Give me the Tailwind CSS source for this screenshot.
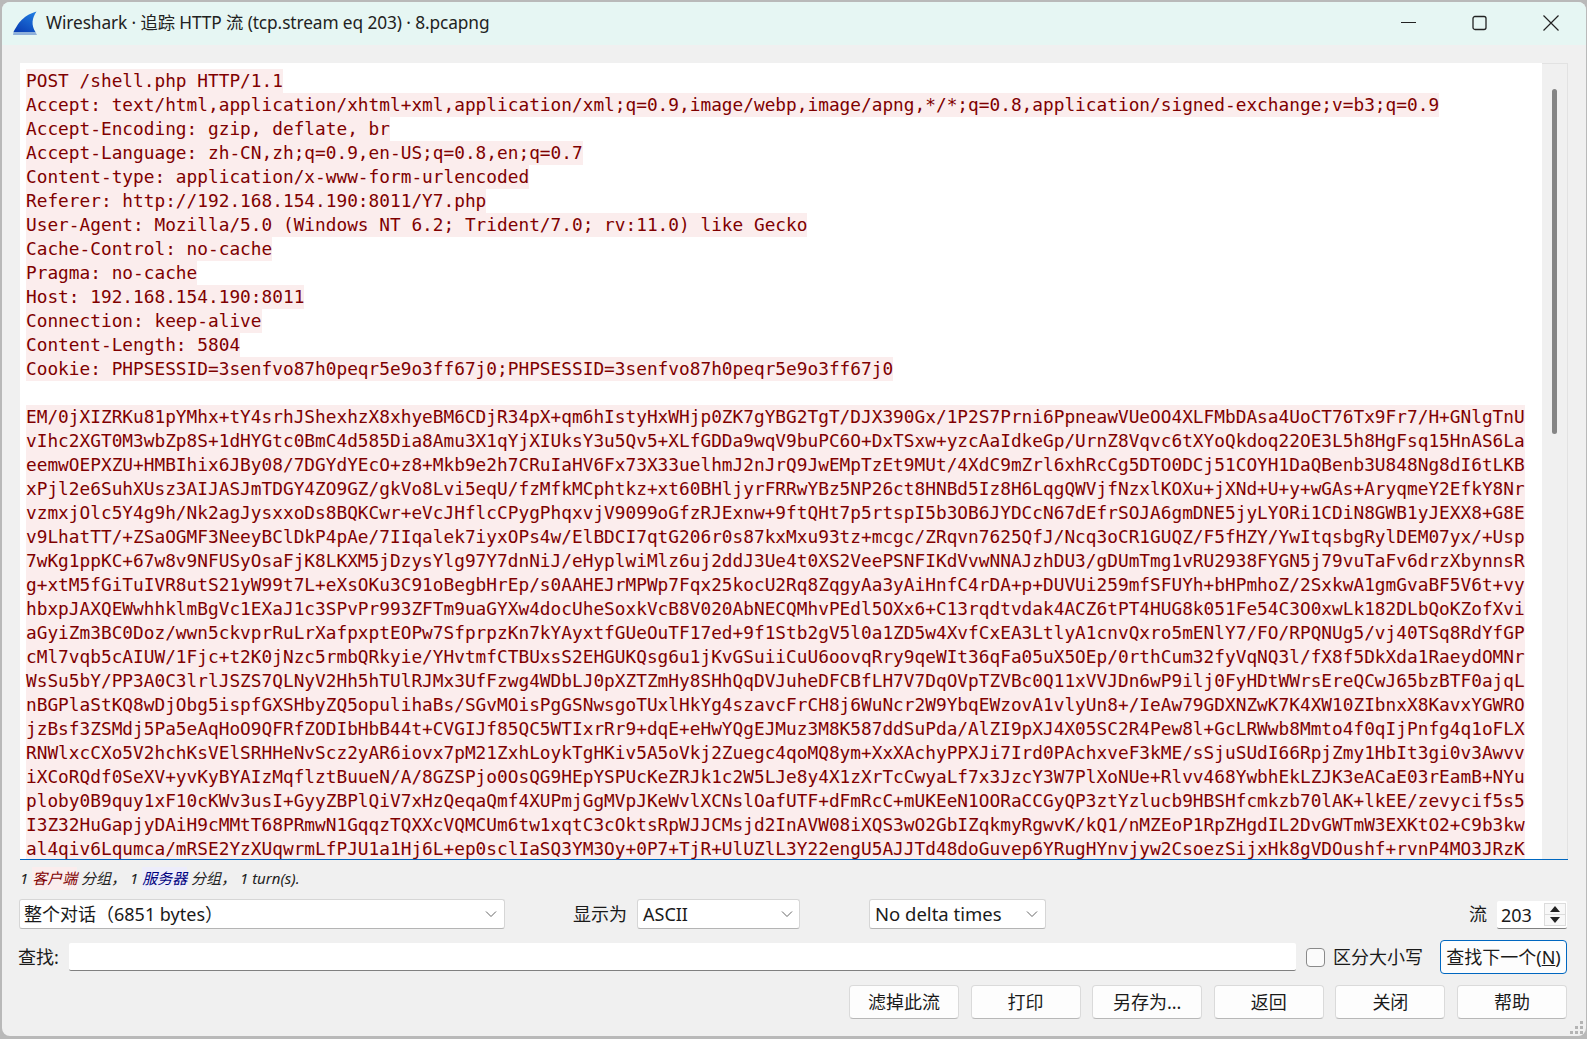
<!DOCTYPE html>
<html lang="zh-CN">
<head>
    <meta charset="UTF-8">
    <title>Wireshark · 追踪 HTTP 流</title>
    <script src="https://cdn.jsdelivr.net/npm/@tailwindcss/browser@4"></script>
</head>
<body class="w-[1587px] h-[1039px] overflow-hidden bg-[#b9b9b9] pt-[2px] pl-[2px] pr-[1px] pb-[3px] font-['Noto_Sans','Noto_Sans_CJK_SC',sans-serif] text-[#1a1a1a]">

    <div class="relative w-full h-full rounded-[8px] overflow-hidden bg-[#f0f0f0] flex flex-col">

        <!-- title bar -->
        <div class="h-[43px] shrink-0 bg-[#e6f6f3] flex items-center pl-[11px] pb-[2px] relative">
            <svg width="25" height="25" viewBox="0 0 25 25" class="shrink-0 mt-[1px]">
                <defs>
                    <linearGradient id="fin" x1="0.8" y1="0" x2="0.2" y2="1">
                        <stop offset="0" stop-color="#1f7be0"/>
                        <stop offset="1" stop-color="#0b3fb4"/>
                    </linearGradient>
                </defs>
                <path d="M0.5 21 C4 15 8 5 23.5 0.5 C19 7 18 14 22.5 21 Z" fill="url(#fin)"/>
                <path d="M0.5 21 L22.5 21 L24 24 L0 24 Z" fill="#8fb0da"/>
            </svg>
            <span class="ml-[8px] text-[17.3px] tracking-[-0.1px] text-[#222]">Wireshark · 追踪 HTTP 流 (tcp.stream eq 203) · 8.pcapng</span>
            <div class="ml-auto flex items-center mr-[27px]">
                <svg width="16" height="16" viewBox="0 0 16 16"><path d="M0 7.5H15" stroke="#222" stroke-width="1.2"/></svg>
                <svg width="16" height="16" viewBox="0 0 16 16" class="ml-[55px]"><rect x="1" y="1.5" width="13" height="13" rx="2" fill="none" stroke="#222" stroke-width="1.3"/></svg>
                <svg width="16" height="16" viewBox="0 0 16 16" class="ml-[55px]"><path d="M0.5 0.5L15.5 15.5M15.5 0.5L0.5 15.5" stroke="#222" stroke-width="1.2"/></svg>
            </div>
        </div>

        <!-- stream text -->
        <div class="mt-[18px] mx-[18px] h-[797px] shrink-0 flex border-b border-[#0067c0]">
            <div class="w-[1522px] h-full bg-white overflow-hidden pt-[6px] pl-[6px] font-['DejaVu_Sans_Mono',monospace] text-[17.8px] leading-[24px] text-[#7f0000] [&>div]:w-fit [&>div]:bg-[#fbeded] [&>div]:whitespace-pre">
                <div>POST /shell.php HTTP/1.1</div>
                <div>Accept: text/html,application/xhtml+xml,application/xml;q=0.9,image/webp,image/apng,*/*;q=0.8,application/signed-exchange;v=b3;q=0.9</div>
                <div>Accept-Encoding: gzip, deflate, br</div>
                <div>Accept-Language: zh-CN,zh;q=0.9,en-US;q=0.8,en;q=0.7</div>
                <div>Content-type: application/x-www-form-urlencoded</div>
                <div>Referer: http://192.168.154.190:8011/Y7.php</div>
                <div>User-Agent: Mozilla/5.0 (Windows NT 6.2; Trident/7.0; rv:11.0) like Gecko</div>
                <div>Cache-Control: no-cache</div>
                <div>Pragma: no-cache</div>
                <div>Host: 192.168.154.190:8011</div>
                <div>Connection: keep-alive</div>
                <div>Content-Length: 5804</div>
                <div>Cookie: PHPSESSID=3senfvo87h0peqr5e9o3ff67j0;PHPSESSID=3senfvo87h0peqr5e9o3ff67j0</div>
                <div class="h-6 !bg-white"></div>
                <div>EM/0jXIZRKu81pYMhx+tY4srhJShexhzX8xhyeBM6CDjR34pX+qm6hIstyHxWHjp0ZK7gYBG2TgT/DJX390Gx/1P2S7Prni6PpneawVUeOO4XLFMbDAsa4UoCT76Tx9Fr7/H+GNlgTnU</div>
                <div>vIhc2XGT0M3wbZp8S+1dHYGtc0BmC4d585Dia8Amu3X1qYjXIUksY3u5Qv5+XLfGDDa9wqV9buPC6O+DxTSxw+yzcAaIdkeGp/UrnZ8Vqvc6tXYoQkdoq22OE3L5h8HgFsq15HnAS6La</div>
                <div>eemwOEPXZU+HMBIhix6JBy08/7DGYdYEcO+z8+Mkb9e2h7CRuIaHV6Fx73X33uelhmJ2nJrQ9JwEMpTzEt9MUt/4XdC9mZrl6xhRcCg5DTO0DCj51COYH1DaQBenb3U848Ng8dI6tLKB</div>
                <div>xPjl2e6SuhXUsz3AIJASJmTDGY4ZO9GZ/gkVo8Lvi5eqU/fzMfkMCphtkz+xt60BHljyrFRRwYBz5NP26ct8HNBd5Iz8H6LqgQWVjfNzxlKOXu+jXNd+U+y+wGAs+AryqmeY2EfkY8Nr</div>
                <div>vzmxjOlc5Y4g9h/Nk2agJysxxoDs8BQKCwr+eVcJHflcCPygPhqxvjV9099oGfzRJExnw+9ftQHt7p5rtspI5b3OB6JYDCcN67dEfrSOJA6gmDNE5jyLYORi1CDiN8GWB1yJEXX8+G8E</div>
                <div>v9LhatTT/+ZSaOGMF3NeeyBClDkP4pAe/7IIqalek7iyxOPs4w/ElBDCI7qtG206r0s87kxMxu93tz+mcgc/ZRqvn7625QfJ/Ncq3oCR1GUQZ/F5fHZY/YwItqsbgRylDEM07yx/+Usp</div>
                <div>7wKg1ppKC+67w8v9NFUSyOsaFjK8LKXM5jDzysYlg97Y7dnNiJ/eHyplwiMlz6uj2ddJ3Ue4t0XS2VeePSNFIKdVvwNNAJzhDU3/gDUmTmg1vRU2938FYGN5j79vuTaFv6drzXbynnsR</div>
                <div>g+xtM5fGiTuIVR8utS21yW99t7L+eXsOKu3C91oBegbHrEp/s0AAHEJrMPWp7Fqx25kocU2Rq8ZqgyAa3yAiHnfC4rDA+p+DUVUi259mfSFUYh+bHPmhoZ/2SxkwA1gmGvaBF5V6t+vy</div>
                <div>hbxpJAXQEWwhhklmBgVc1EXaJ1c3SPvPr993ZFTm9uaGYXw4docUheSoxkVcB8V020AbNECQMhvPEdl5OXx6+C13rqdtvdak4ACZ6tPT4HUG8k051Fe54C3O0xwLk182DLbQoKZofXvi</div>
                <div>aGyiZm3BC0Doz/wwn5ckvprRuLrXafpxptEOPw7SfprpzKn7kYAyxtfGUeOuTF17ed+9f1Stb2gV5l0a1ZD5w4XvfCxEA3LtlyA1cnvQxro5mENlY7/FO/RPQNUg5/vj40TSq8RdYfGP</div>
                <div>cMl7vqb5cAIUW/1Fjc+t2K0jNzc5rmbQRkyie/YHvtmfCTBUxsS2EHGUKQsg6u1jKvGSuiiCuU6oovqRry9qeWIt36qFa05uX5OEp/0rthCum32fyVqNQ3l/fX8f5DkXda1RaeydOMNr</div>
                <div>WsSu5bY/PP3A0C3lrlJSZS7QLNyV2Hh5hTUlRJMx3UfFzwg4WDbLJ0pXZTZmHy8SHhQqDVJuheDFCBfLH7V7DqOVpTZVBc0Q11xVVJDn6wP9ilj0FyHDtWWrsEreQCwJ65bzBTF0ajqL</div>
                <div>nBGPlaStKQ8wDjObg5ispfGXSHbyZQ5opulihaBs/SGvMOisPgGSNwsgoTUxlHkYg4szavcFrCH8j6WuNcr2W9YbqEWzovA1vlyUn8+/IeAw79GDXNZwK7K4XW10ZIbnxX8KavxYGWRO</div>
                <div>jzBsf3ZSMdj5Pa5eAqHoO9QFRfZODIbHbB44t+CVGIJf85QC5WTIxrRr9+dqE+eHwYQgEJMuz3M8K587ddSuPda/AlZI9pXJ4X05SC2R4Pew8l+GcLRWwb8Mmto4f0qIjPnfg4q1oFLX</div>
                <div>RNWlxcCXo5V2hchKsVElSRHHeNvScz2yAR6iovx7pM21ZxhLoykTgHKiv5A5oVkj2Zuegc4qoMQ8ym+XxXAchyPPXJi7Ird0PAchxveF3kME/sSjuSUdI66RpjZmy1HbIt3gi0v3Awvv</div>
                <div>iXCoRQdf0SeXV+yvKyBYAIzMqflztBuueN/A/8GZSPjo0OsQG9HEpYSPUcKeZRJk1c2W5LJe8y4X1zXrTcCwyaLf7x3JzcY3W7PlXoNUe+Rlvv468YwbhEkLZJK3eACaE03rEamB+NYu</div>
                <div>ploby0B9quy1xF10cKWv3usI+GyyZBPlQiV7xHzQeqaQmf4XUPmjGgMVpJKeWvlXCNslOafUTF+dFmRcC+mUKEeN1OORaCCGyQP3ztYzlucb9HBSHfcmkzb70lAK+lkEE/zevycif5s5</div>
                <div>I3Z32HuGapjyDAiH9cMMtT68PRmwN1GqqzTQXXcVQMCUm6tw1xqtC3cOktsRpWJJCMsjd2InAVW08iXQS3wO2GbIZqkmyRgwvK/kQ1/nMZEoP1RpZHgdIL2DvGWTmW3EXKtO2+C9b3kw</div>
                <div>al4qiv6Lqumca/mRSE2YzXUqwrmLfPJU1a1Hj6L+ep0sclIaSQ3YM3Oy+0P7+TjR+UlUZlL3Y22engU5AJJTd48doGuvep6YRugHYnvjyw2CsoezSijxHk8gVDOushf+rvnP4MO3JRzK</div>
            </div>
            <!-- scrollbar -->
            <div class="flex-1 bg-[#f0f0f0] border-r border-t border-[#e2e2e2] pt-[25px] pl-[10px]">
                <div class="w-[5px] h-[345px] rounded-full bg-[#858585]"></div>
            </div>
        </div>

        <!-- packet summary -->
        <div class="h-[39px] shrink-0 ml-[18px] pb-[2px] flex items-center text-[15px] italic text-[#222]">
            <span>1&nbsp;</span><span class="bg-[#fbeded] text-[#7f0000]">客户端</span><span>&nbsp;分组，&nbsp;1&nbsp;</span><span class="bg-[#ededfb] text-[#00007f]">服务器</span><span>&nbsp;分组，&nbsp;1 turn(s).</span>
        </div>

        <!-- show / stream row -->
        <div class="h-[30px] shrink-0 ml-[17px] flex items-center text-[18px] leading-[26px]">
            <div class="w-[486px] h-full bg-white rounded-[3px] border border-[#d6d6d6] border-b-[#b4b4b4] flex items-center justify-between pl-[4px] pr-[7px]">
                <span>整个对话（6851 bytes）</span>
                <svg width="12" height="8" viewBox="0 0 12 8"><path d="M1 1.5L6 6.5L11 1.5" fill="none" stroke="#666" stroke-width="1"/></svg>
            </div>
            <span class="ml-[68px] w-[64px]">显示为</span>
            <div class="w-[163px] h-full bg-white rounded-[3px] border border-[#d6d6d6] border-b-[#b4b4b4] flex items-center justify-between pl-[5px] pr-[6px]">
                <span>ASCII</span>
                <svg width="12" height="8" viewBox="0 0 12 8"><path d="M1 1.5L6 6.5L11 1.5" fill="none" stroke="#666" stroke-width="1"/></svg>
            </div>
            <div class="ml-[69px] w-[177px] h-full bg-white rounded-[3px] border border-[#d6d6d6] border-b-[#b4b4b4] flex items-center justify-between pl-[5px] pr-[7px]">
                <span class="text-[18.5px]">No delta times</span>
                <svg width="12" height="8" viewBox="0 0 12 8"><path d="M1 1.5L6 6.5L11 1.5" fill="none" stroke="#666" stroke-width="1"/></svg>
            </div>
            <span class="ml-[423px]">流</span>
            <div class="ml-[10px] w-[70px] h-[28px] mt-[2px] bg-white border-b border-[#808080] rounded-[2px] flex items-center pl-[4px] pr-[1px] justify-between">
                <span>203</span>
                <div class="w-[22px] flex flex-col">
                    <div class="h-[12px] bg-[#f8f8f8] border border-[#dcdcdc] flex items-center justify-center">
                        <svg width="10" height="6" viewBox="0 0 10 6"><path d="M5 0L10 6H0Z" fill="#222"/></svg>
                    </div>
                    <div class="h-[11px] bg-[#f8f8f8] border border-[#dcdcdc] border-t-0 flex items-center justify-center">
                        <svg width="10" height="6" viewBox="0 0 10 6"><path d="M0 0H10L5 6Z" fill="#222"/></svg>
                    </div>
                </div>
            </div>
        </div>

        <!-- find row -->
        <div class="h-[34px] mt-[11px] shrink-0 ml-[16px] flex items-center text-[18px] leading-[26px]">
            <span class="w-[51px]">查找:</span>
            <div class="w-[1227px] h-[28px] bg-white border-b border-[#808080] rounded-[2px]"></div>
            <div class="ml-[10px] w-[19px] h-[19px] bg-[#fbfbfb] border border-[#8a8a8a] rounded-[4px]"></div>
            <span class="ml-[8px] w-[107px]">区分大小写</span>
            <div class="w-[127px] h-full bg-[#fdfdfd] border border-[#0067c0] rounded-[4px] flex items-center justify-center">查找下一个(<span class="underline">N</span>)</div>
        </div>

        <!-- buttons -->
        <div class="h-[34px] mt-[11px] shrink-0 ml-[847px] flex gap-[11.6px] text-[18px] leading-[26px] [&>div]:w-[110px] [&>div]:h-full [&>div]:bg-[#fdfdfd] [&>div]:border [&>div]:border-[#dadada] [&>div]:border-b-[#b8b8b8] [&>div]:rounded-[4px] [&>div]:flex [&>div]:items-center [&>div]:justify-center">
            <div>滤掉此流</div>
            <div>打印</div>
            <div>另存为...</div>
            <div>返回</div>
            <div>关闭</div>
            <div>帮助</div>
        </div>

        <!-- resize grip -->
        <svg width="14" height="14" viewBox="0 0 14 14" class="absolute right-[2px] bottom-[1px]" fill="#b4b4b4">
            <rect x="10" y="0" width="3" height="3"/>
            <rect x="5" y="5" width="3" height="3"/><rect x="10" y="5" width="3" height="3"/>
            <rect x="0" y="10" width="3" height="3"/><rect x="5" y="10" width="3" height="3"/><rect x="10" y="10" width="3" height="3"/>
        </svg>
    </div>

</body>
</html>
